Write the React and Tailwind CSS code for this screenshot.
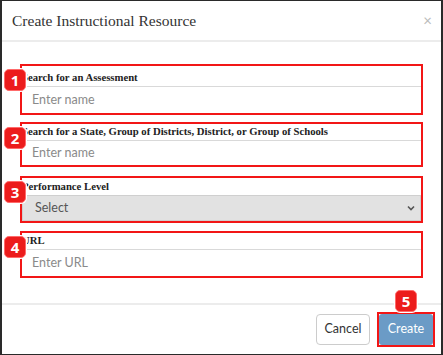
import React from "react";

const serif = { fontFamily: '"Liberation Serif", "DejaVu Serif", serif' };

function Badge({ n, className }) {
  return (
    <div
      className={
        "absolute w-[22px] h-[22px] rounded-[5px] bg-[#ec1c1c] border border-[#ff6b6b] text-white font-bold text-[15px] leading-none flex items-center justify-center shadow-[0_0_0_1px_#fff] " +
        className
      }
      style={{ fontFamily: '"Open Sans", "Liberation Sans", sans-serif' }}
    >
      {n}
    </div>
  );
}

function Group({ n, label, children, className }) {
  return (
    <div className={"relative border-2 border-[#f21616] " + className}>
      <Badge n={n} className="left-[-18px] top-[3px]" />
      <div className="text-[10.7px] font-bold text-[#222] leading-[14px] h-[14px] mb-[2px]" style={serif}>
        {label}
      </div>
      {children}
    </div>
  );
}

function Input({ placeholder, h }) {
  return (
    <div className={"border-t border-[#d9d9d9] flex items-center pl-[10px] text-[12.5px] text-[#8a8a8a] " + h}>
      {placeholder}
    </div>
  );
}

export default function App() {
  return (
    <div
      className="w-[443px] h-[355px] bg-white border-l-2 border-t border-r-2 border-b border-[#2a2a2a] flex flex-col overflow-hidden"
      style={{ fontFamily: 'Lato, "Open Sans", sans-serif' }}
    >
      <div className="h-[41px] flex items-center justify-between pl-[10px] pr-[9px] border-b-2 border-[#ececec] shrink-0">
        <div className="text-[15.5px] text-[#333]" style={serif}>
          Create Instructional Resource
        </div>
        <div className="text-[15px] text-[#bbb] leading-none">×</div>
      </div>
      <div className="px-[18px] pt-[22px] flex flex-col">
        <Group n="1" label="Search for an Assessment" className="pt-[4px]">
          <Input placeholder="Enter name" h="h-[27px]" />
        </Group>
        <Group n="2" label="Search for a State, Group of Districts, District, or Group of Schools" className="mt-[7px]">
          <Input placeholder="Enter name" h="h-[25px]" />
        </Group>
        <Group n="3" label="Performance Level" className="mt-[9px] pt-[1px]">
          <div className="h-[26px] bg-[#e2e2e2] border border-[#cfcfcf] flex items-center justify-between pl-[12px] pr-[4px] text-[12.5px] text-[#555]">
            <span>Select</span>
            <svg width="10" height="10" viewBox="0 0 10 10">
              <path d="M2 3.5 L5 6.5 L8 3.5" stroke="#555" strokeWidth="1.6" fill="none" />
            </svg>
          </div>
        </Group>
        <Group n="4" label="URL" className="mt-[8px]">
          <Input placeholder="Enter URL" h="h-[27px]" />
        </Group>
      </div>
      <div className="mt-auto h-[51px] border-t-2 border-[#ececec] flex items-center justify-end gap-[7px] pr-[6px] relative">
        <button className="h-[31px] w-[54px] rounded-[4px] border border-[#ccc] bg-white text-[12.5px] text-[#333]">
          Cancel
        </button>
        <div className="relative border-2 border-[#f21616] p-0">
          <Badge n="5" className="left-[16px] top-[-24px]" />
          <button className="h-[31px] w-[54px] rounded-[3px] bg-[#6b9bc6] text-[12.5px] text-white block">
            Create
          </button>
        </div>
      </div>
    </div>
  );
}
